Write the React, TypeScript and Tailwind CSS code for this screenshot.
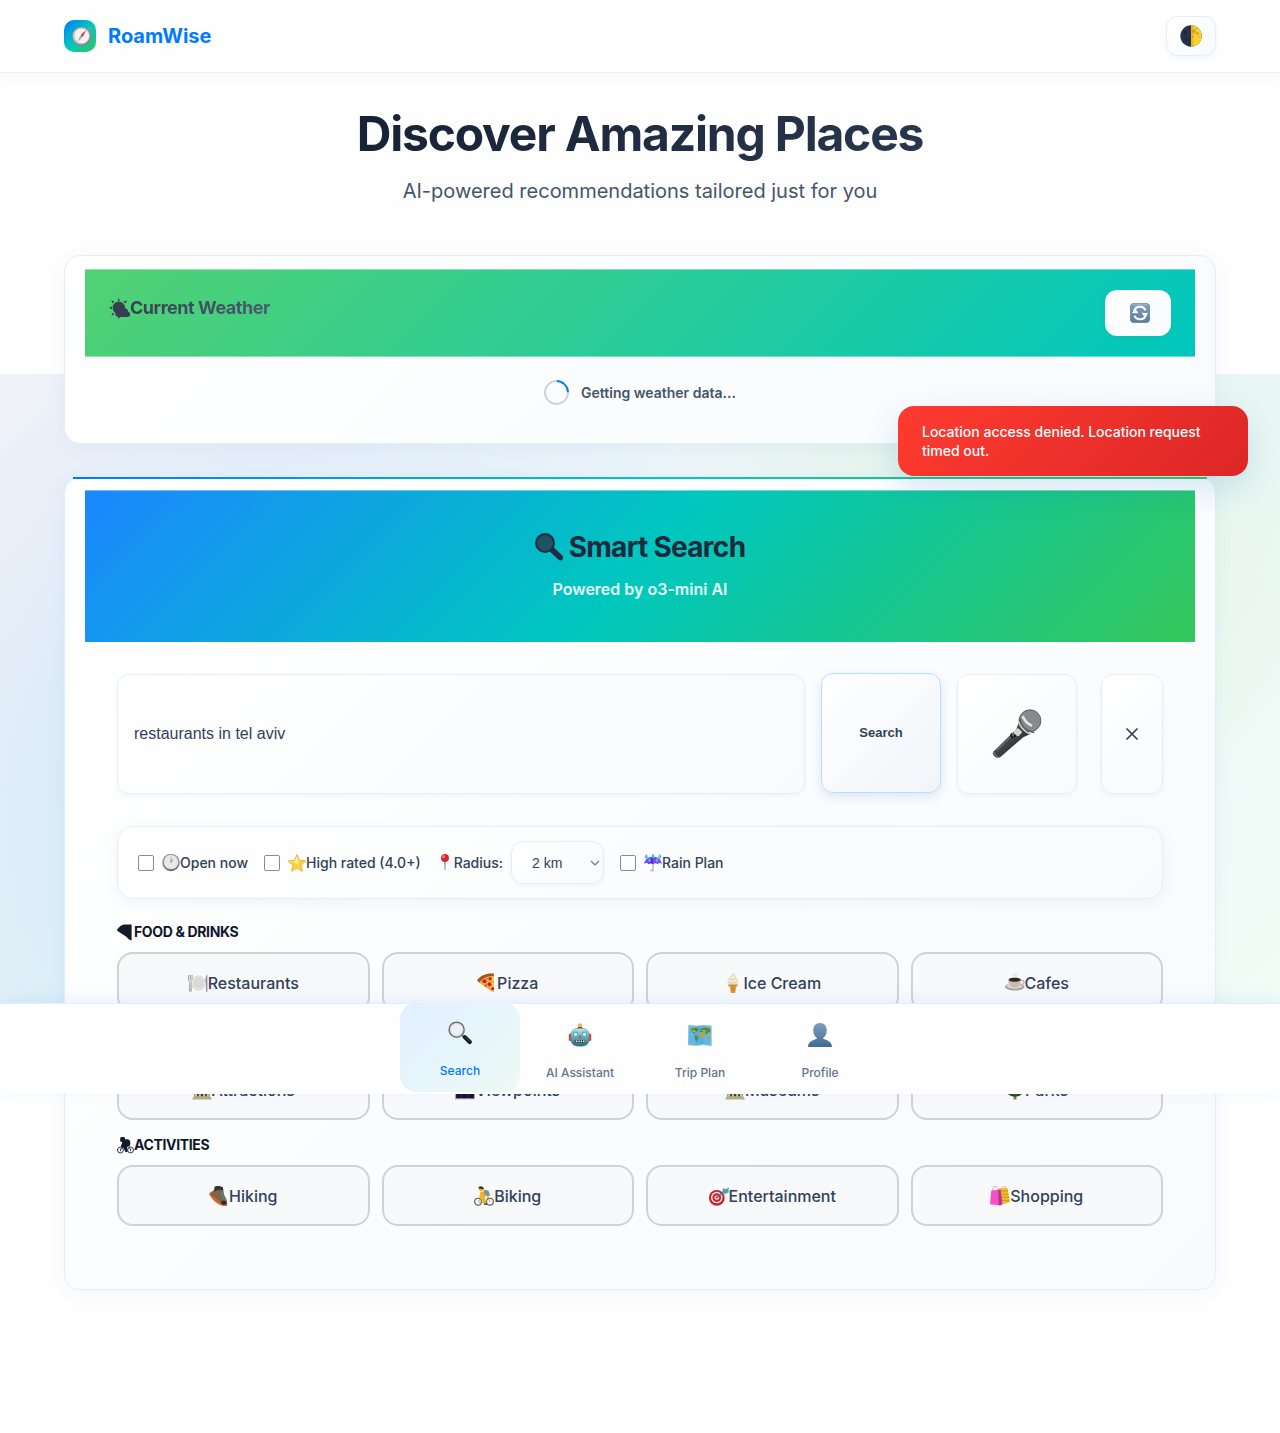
import type { ReactNode } from "react";

type IconProps = { className?: string };

function Svg({ className = "", children }: { className?: string; children: ReactNode }) {
  return (
    <svg viewBox="0 0 32 32" className={`shrink-0 ${className}`} aria-hidden="true">
      {children}
    </svg>
  );
}

function CompassIcon({ className }: IconProps) {
  return (
    <Svg className={className}>
      <defs>
        <linearGradient id="compassRim" x1="0" y1="0" x2="1" y2="1">
          <stop offset="0" stopColor="#e4e6e8" />
          <stop offset="1" stopColor="#6f7478" />
        </linearGradient>
      </defs>
      <circle cx="28" cy="4" r="2.4" fill="none" stroke="#8b9ba0" strokeWidth="1.2" />
      <circle cx="15.500" cy="16.500" r="15" fill="url(#compassRim)" stroke="#7b8084" />
      <circle cx="15.500" cy="16" r="12.300" fill="#f3f3f4" stroke="#b9bcc0" />
      <path d="M22.500 6.500 17.3 17.700 13.700 14.700Z" fill="#e22b2b" />
      <path d="M8.500 25.500 13.700 14.700 17.300 17.700Z" fill="#a7abb0" />
    </Svg>
  );
}

function MoonIcon({ className }: IconProps) {
  return (
    <Svg className={className}>
      <circle cx="16" cy="16" r="15.5" fill="#263248" />
      <path d="M16 .5a15.5 15.5 0 0 1 0 31Z" fill="#fbd22c" />
      <path d="M16 .5v31c2 0 3-.2 4-.5V1c-1-.3-2-.5-4-.5" fill="#d9a62c" opacity=".55" />
      <circle cx="20" cy="9" r="2.6" fill="#c99b32" />
      <circle cx="25" cy="12" r="2.4" fill="#d8a830" />
      <circle cx="23" cy="6" r="1.6" fill="#dcae38" />
      <circle cx="18" cy="17" r="1.5" fill="#c99b32" />
      <circle cx="27" cy="17" r="1.2" fill="#e0b02e" />
      <circle cx="8" cy="11" r="2.5" fill="#1c263b" />
      <circle cx="10" cy="21" r="2" fill="#1f2a40" />
    </Svg>
  );
}

function SunCloudShape({ className }: IconProps) {
  return (
    <Svg className={className}>
      <g fill="#373e50">
        <circle cx="15" cy="15" r="9.500" />
        <path d="M10 23c-1-8 8-11 12-7 5-1 7 2 7 5 5 1 4 8-1 8H15c-4 0-6-3-5-6Z" />
        <path d="m15 0 1.800 4h-3.600ZM3.600 3.600l4.600 1.800-2.800 2.800ZM27 3.600 25.200 8.200l-3.200-2.400ZM0 15l4.500-2v4ZM3.600 27l1.800-4.600 2.800 2.800ZM15 32l-1.800-4h3.600Z" />
      </g>
    </Svg>
  );
}

function RefreshIcon({ className }: IconProps) {
  return (
    <Svg className={className}>
      <defs>
        <linearGradient id="refreshTile" x1="0" y1="0" x2="0" y2="1">
          <stop offset="0" stopColor="#9db9d6" />
          <stop offset=".2" stopColor="#7795b5" />
          <stop offset="1" stopColor="#5f7f9f" />
        </linearGradient>
      </defs>
      <rect x=".5" y=".5" width="31" height="31" rx="6" fill="url(#refreshTile)" stroke="#58738f" />
      <path d="M6.500 14C8 4.500 21 3.500 25 11.500M25.500 18C24 28 11 28.500 7 20.500" fill="none" stroke="#fff" strokeWidth="3.200" />
      <path d="M3 16 13.500 16.500 8.500 9ZM29 16 18.500 15.500l5 7.500Z" fill="#fff" />
    </Svg>
  );
}

function MagnifierShape({ className }: IconProps) {
  return (
    <Svg className={className}>
      <path d="m20 19.500 9 8.500" stroke="#202c42" strokeWidth="6.500" strokeLinecap="round" />
      <circle cx="11.500" cy="11.500" r="10.200" fill="#1f5263" stroke="#202c42" strokeWidth="2.400" />
    </Svg>
  );
}

function MagnifierIcon({ className }: IconProps) {
  return (
    <Svg className={className}>
      <path d="m19 19 3 3" stroke="#7b7f86" strokeWidth="3" />
      <path d="m22.500 21.500 6.500 6.500" stroke="#15171a" strokeWidth="5.500" strokeLinecap="round" />
      <path d="m23 21 6 6" stroke="#6c7077" strokeWidth="1" />
      <circle cx="11.500" cy="11.500" r="10" fill="#edf1f5" stroke="#6c717a" strokeWidth="2" />
      <circle cx="11.500" cy="11.500" r="8.300" fill="none" stroke="#c8ced6" strokeWidth="1" />
    </Svg>
  );
}

function MicIcon({ className }: IconProps) {
  return (
    <Svg className={className}>
      <defs>
        <linearGradient id="micBody" x1="0" y1="0" x2="1" y2="1">
          <stop offset="0" stopColor="#77797b" />
          <stop offset=".4" stopColor="#4b4b4c" />
          <stop offset="1" stopColor="#111" />
        </linearGradient>
        <pattern id="micMesh" width="1.200" height="1.200" patternUnits="userSpaceOnUse">
          <rect width="1.200" height="1.200" fill="#6a6c6f" />
          <circle cx=".6" cy=".6" r=".4" fill="#bcbec1" />
        </pattern>
      </defs>
      <path d="M17.200 8.500 15.500 13 .8 27.300c-.8 1 .1 2.400 1.200 3.200 1 .8 2.400 1.100 3.200.3L20 18l4.500-2Z" fill="url(#micBody)" />
      <path d="M15.500 14.500 3 26.500" stroke="#8a8c8e" strokeWidth=".6" />
      <path d="M1 27.200c.3 1.800 2 3.500 4 3.900" stroke="#a8aaac" strokeWidth=".5" fill="none" />
      <circle cx="24.300" cy="7.500" r="7" fill="url(#micMesh)" stroke="#4e5052" strokeWidth=".5" />
      <path d="M17.600 6c1 5 4.500 8.500 9.500 9" stroke="#595b5d" strokeWidth="1" fill="none" />
      <path d="M19.600 4.500c1.200 3.200 3 5 6 6.200" stroke="#dfe5eb" strokeWidth="1.700" fill="none" />
      <path d="M17 8c1.200 3.900 3.200 6.200 7 7.900" stroke="#d9dcdf" strokeWidth=".8" fill="none" />
      <rect x="14.400" y="12.800" width="4.200" height="4.200" rx="1" transform="rotate(43 16.500 14.900)" fill="#d3d4d6" />
      <path d="M12.600 15.600c-.9 1-.5 2.300.7 2.800M15.200 16.800l-1 1" stroke="#0b0b0b" strokeWidth=".8" fill="none" />
    </Svg>
  );
}

function ClockIcon({ className }: IconProps) {
  return (
    <Svg className={className}>
      <defs>
        <linearGradient id="clockRim" x1="0" y1="0" x2="0" y2="1">
          <stop offset="0" stopColor="#a6a6a6" />
          <stop offset="1" stopColor="#6b6b6b" />
        </linearGradient>
      </defs>
      <circle cx="16" cy="15" r="15.500" fill="url(#clockRim)" />
      <circle cx="16" cy="14.500" r="12.800" fill="#e9e9e9" />
      <path d="M16 3v2M16 24v2M4.500 14.500h2M25.500 14.500h2M8 6.500l1.300 1.300M24 6.500l-1.300 1.300M8 22.500l1.300-1.300M24 22.500l-1.300-1.300" stroke="#c9c9c9" strokeWidth="1.200" />
      <path d="M16 15.500V6M16 15.500l3.500-6" stroke="#8a8a8a" strokeWidth="1.400" />
    </Svg>
  );
}

function StarIcon({ className }: IconProps) {
  return (
    <Svg className={className}>
      <path
        d="m16 1 4.500 10.200 11 1.100-8.300 7.400 2.500 11L16 25l-9.700 5.700 2.500-11L.5 12.300l11-1.100Z"
        fill="#fdd43f"
        stroke="#efa82f"
        strokeWidth="1.500"
        strokeLinejoin="round"
      />
      <path d="m16 4 3 8.500-3 5-8-4 4.500-1Z" fill="#fff3a8" />
    </Svg>
  );
}

function PinIcon({ className }: IconProps) {
  return (
    <Svg className={className}>
      <path d="M13.800 13h2.400l-.4 17h-1.600Z" fill="#8c7f7c" />
      <circle cx="15" cy="7.500" r="7.500" fill="#d9262b" />
      <circle cx="12.500" cy="5" r="2.600" fill="#f58b85" />
    </Svg>
  );
}

function UmbrellaIcon({ className }: IconProps) {
  return (
    <Svg className={className}>
      <path d="M16 12v15c0 4-4 4-4 1" fill="none" stroke="#a4a1aa" strokeWidth="2" />
      <path d="M0 18C2 8 9 5 16 5s14 3 16 13c-3-3-6-2-8 0-2-2-5-2-8 0-3-2-6-2-8 0-2-2-5-3-8 0Z" fill="#8347ea" />
      <path d="M16 5c-5 2-7 7-8 13 2-2 5-2 8 0Z" fill="#4a35cf" />
      <g fill="#43bdf5">
        <path d="M4 0c3 4 4 8 0 8s-3-4 0-8ZM16-1c3 4 4 8 0 8s-3-4 0-8ZM28 0c3 4 4 8 0 8s-3-4 0-8ZM10 7c3 4 3 7 0 7s-3-3 0-7ZM23 7c3 4 3 7 0 7s-3-3 0-7Z" />
      </g>
    </Svg>
  );
}

function PizzaShape({ className }: IconProps) {
  return (
    <Svg className={className}>
      <path d="M0 11Q6 2 14 1h13.500v30c-4 0-7-4-10-7L1 13Z" fill="#121a2c" />
    </Svg>
  );
}

function CyclistShape({ className }: IconProps) {
  return (
    <Svg className={className}>
      <g fill="none" stroke="#222b3e" strokeWidth="1.800">
        <circle cx="6.500" cy="24.500" r="5.500" />
        <circle cx="25.500" cy="24.500" r="5.500" />
        <path d="M6.500 24.500 12 17M25.500 24.500 22 16M6.500 22v5M25.500 22v5" strokeWidth="1.500" />
      </g>
      <path d="M6 2 8 0h6l2 5c6-2 9 1 9 6 0 3 0 5-2 6l-4 2 1 9h-4l-4-8-5-2 3-8-4-2Z" fill="#121a2c" />
    </Svg>
  );
}

function PlateIcon({ className }: IconProps) {
  return (
    <Svg className={className}>
      <path d="M1 3v8c0 2 1 3 2 3.500L2.300 29h3L4.700 14.500C6 14 6.500 12 6.500 11V3M3.700 3v9" fill="none" stroke="#7f8c97" strokeWidth="1.300" />
      <path d="M31 2v28h-2l-.5-13c-1.500-5-.5-12 2.500-15Z" fill="#8b959e" />
      <circle cx="16.500" cy="16" r="11.200" fill="#eceae7" stroke="#bfc0c1" strokeWidth="1" />
      <circle cx="16.500" cy="16" r="7.500" fill="#dcdad7" stroke="#c6c4c2" />
    </Svg>
  );
}

function PizzaIcon({ className }: IconProps) {
  return (
    <Svg className={className}>
      <path d="M1 13C6 5 16 0 27 1v30C19 27 8 19 1 13Z" fill="#efb04a" />
      <path d="M0 12C5 4 16 0 27 1v4C18 4 9 8 4 15Z" fill="#a9541d" />
      <path d="M27 6v24l-4-2V7Z" fill="#f5c464" />
      <g fill="#c9261b">
        <circle cx="12" cy="13" r="3.200" />
        <circle cx="21" cy="9" r="2.800" />
        <circle cx="20" cy="18" r="3.200" />
        <circle cx="25" cy="25" r="2.500" />
        <circle cx="14" cy="20" r="1.500" />
      </g>
      <path d="M15 8l2 2M8 14l1 1M25 13l1 2" stroke="#5b7a28" strokeWidth="1.500" />
    </Svg>
  );
}

function IceCreamIcon({ className }: IconProps) {
  return (
    <Svg className={className}>
      <path d="M8 17h16l-1 5h-2l-1.500 10h-7L11 22H9Z" fill="#e3a245" />
      <path d="M11 20h10M12 24h8M13 28h6M14.500 18v13M17.500 18v13" stroke="#bd7b2b" strokeWidth=".8" />
      <path d="M17 0c-1 3 5 4 3 8 4 1 4 5 3 6 2 2 1 4-1 4H10c-3 0-3-3-1-4-2-2-1-5 2-6-1-4 4-4 6-8Z" fill="#f2ead5" stroke="#d3c6a7" strokeWidth=".8" />
      <path d="M12 10c3 2 6 0 8-1M10 15c4 1.500 8 1 12-1" fill="none" stroke="#cdbd98" />
    </Svg>
  );
}

function CoffeeIcon({ className }: IconProps) {
  return (
    <Svg className={className}>
      <ellipse cx="15.500" cy="22" rx="15.500" ry="6" fill="#a9a29b" />
      <ellipse cx="15.500" cy="20.500" rx="13" ry="4.500" fill="#dedad5" />
      <path d="M25 12c7-2 8 6-1 7" fill="none" stroke="#bab4ad" strokeWidth="2.200" />
      <path d="M5 10h21c0 8-3 13-10.500 13S5 18 5 10Z" fill="#c4beb7" />
      <ellipse cx="15.500" cy="10.500" rx="10.500" ry="3.800" fill="#d8d3ce" />
      <ellipse cx="15.500" cy="10.800" rx="9.500" ry="3.200" fill="#3c2117" />
      <path d="M14 6c-3-3 3-3 1-6M18 6c-2-2 1-3 0-5" fill="none" stroke="#cfd0d2" strokeWidth="1.400" />
    </Svg>
  );
}

function TempleIcon({ className }: IconProps) {
  return (
    <Svg className={className}>
      <path d="M16 3 30 11H2Z" fill="#c9bf92" />
      <path d="M4 12h24v3H4Z" fill="#afa576" />
      <path d="M4 15h24v12H4Z" fill="#463d31" />
      <path d="M5 15h3v12H5ZM11 15h3v12h-3ZM18 15h3v12h-3ZM24 15h3v12h-3Z" fill="#d8d0a6" />
      <path d="M3 26h26l3 5H0Z" fill="#b7ae80" />
    </Svg>
  );
}

function NightViewIcon({ className }: IconProps) {
  return (
    <Svg className={className}>
      <rect x="1" y="2" width="30" height="28" fill="#2c2147" />
      <path d="M3 12h6v18H3ZM12 7h8v23h-8ZM23 14h6v16h-6Z" fill="#191329" />
      <path d="M0 30h32" stroke="#a9a4b5" strokeWidth="1.500" />
    </Svg>
  );
}

function TreeIcon({ className }: IconProps) {
  return (
    <Svg className={className}>
      <path d="M14.500 22h3l1 9h-5Z" fill="#9b7225" />
      <path d="M16 1c6 0 10 5 9 9 5 3 6 10 1 13-4 3-16 3-20 0-5-3-4-10 1-13C6 6 10 1 16 1Z" fill="#2f6a22" />
      <path d="M5 22c7 3 15 3 22 0-4 6-18 6-22 0Z" fill="#153f12" />
    </Svg>
  );
}

function BootIcon({ className }: IconProps) {
  return (
    <Svg className={className}>
      <path d="M0 13 3 9l9 9 8 9 9 2v3l-8-.500Q11 28 5 20Z" fill="#df6028" />
      <path d="M3 10 9 6V2l5-2 8 2 2 11c1 4 5 8 5 13l-1 4c-6 2-9-2-12-6L3 14Z" fill="#85624a" />
      <path d="M9 1c4-2 9-1 13 1l1 5-8-1-7 3Z" fill="#3b3431" />
      <path d="m20 8-2 2 4 2-2 3 5 2-3 3 5 2" stroke="#2c9da0" strokeWidth="1.500" fill="none" />
      <path d="M19 25q5-3 9 1v3l-7 1Z" fill="#382a27" />
    </Svg>
  );
}

function BikingIcon({ className }: IconProps) {
  return (
    <Svg className={className}>
      <g fill="#f5f5f5" stroke="#575f60" strokeWidth="1.800">
        <circle cx="6.500" cy="25" r="5.500" />
        <circle cx="25.500" cy="25" r="5.500" />
      </g>
      <path d="m6.500 25 6-7 6 8 4-9 3 8M19 26H8" fill="none" stroke="#a1a437" strokeWidth="1.500" />
      <path d="m10 10 9-3 5 6-7 5 3 11h-4l-4-9-3-3Z" fill="#ecb124" />
      <path d="m16 6 7 1 3 8-5 1-5-4Z" fill="#878e94" />
      <path d="m12 10-2 7 4 1" stroke="#f2b828" strokeWidth="2.500" fill="none" />
      <circle cx="11.500" cy="5" r="3.500" fill="#f2b21e" />
      <path d="M7 4c0-5 8-5 9 1Z" fill="#313435" />
      <path d="M16 29h5" stroke="#333" strokeWidth="2" />
    </Svg>
  );
}

function TargetIcon({ className }: IconProps) {
  return (
    <Svg className={className}>
      <circle cx="12.500" cy="19" r="12.500" fill="#c4202a" />
      <circle cx="12.500" cy="18.500" r="9.200" fill="#f4eeee" />
      <circle cx="12.500" cy="18.500" r="7" fill="#d3232f" />
      <circle cx="12.500" cy="18.500" r="3.500" fill="#fff" />
      <circle cx="12.500" cy="18.500" r="1.700" fill="#c4202a" />
      <path d="m13 18 14-12" stroke="#357d87" strokeWidth="2.400" />
      <path d="m21 10 2-7 4 2 5-3-1 5 1 3-7 3Z" fill="#46a8b0" />
    </Svg>
  );
}

function BagsIcon({ className }: IconProps) {
  return (
    <Svg className={className}>
      <path d="M19 5c-1-6 7-6 7 0M4 7c-1-8 9-9 9 0" stroke="#eba0a6" strokeWidth="1.500" fill="none" />
      <path d="m13 4 15-1 4 23-15 4Z" fill="#efbc25" />
      <path d="M17 8h12M18 13h12M19 18h12M19 23h12" stroke="#d1911b" strokeWidth="1.500" />
      <path d="m2 7 13-1 3 25-18-2Z" fill="#f550c6" />
      <path d="m13 6 4 0 3 23-6 2Z" fill="#b83397" />
    </Svg>
  );
}

function RobotIcon({ className }: IconProps) {
  return (
    <Svg className={className}>
      <defs>
        <linearGradient id="robotHead" x1="0" y1="0" x2="0" y2="1">
          <stop offset="0" stopColor="#cfe5e8" />
          <stop offset="1" stopColor="#1f6876" />
        </linearGradient>
      </defs>
      <rect x="1" y="14" width="5" height="10" rx="2" fill="#cc4c46" />
      <rect x="26" y="14" width="5" height="10" rx="2" fill="#cc4c46" />
      <rect x="13" y="5" width="6" height="4" fill="#6c3c60" />
      <circle cx="16" cy="3" r="2.800" fill="#f1bb2b" />
      <path d="M4 15q0-8 12-8t12 8v9q-1 7-12 7T4 24Z" fill="url(#robotHead)" stroke="#4e8c94" strokeWidth=".8" />
      <circle cx="10" cy="15" r="3.900" fill="#36bed4" />
      <circle cx="22" cy="15" r="3.900" fill="#36bed4" />
      <circle cx="10" cy="15" r="2" fill="#fff" />
      <circle cx="22" cy="15" r="2" fill="#fff" />
      <path d="m16 16 2 4h-4Z" fill="#dd3d35" />
      <rect x="9" y="22.500" width="14" height="4" rx="1.500" fill="#244952" />
      <path d="M10.500 24.500h2M14 24.500h1.700M17 24.500h1.700M20 24.500h2" stroke="#edf1f2" strokeWidth="2.200" />
    </Svg>
  );
}

function MapIcon({ className }: IconProps) {
  return (
    <Svg className={className}>
      <path d="m1 3 10 1 10-1 10 1v26l-10-1-10 1-11-1Z" fill="#4fb0ea" stroke="#c9c6af" strokeWidth="1.200" />
      <path d="M1 3 11 4v26L0 29ZM21 3l10 1v26l-10-1Z" fill="#6cc2f0" opacity=".5" />
      <path d="m4 8 6-2 5 2-2 3-3 1-1 3-4-4ZM9 16l5 2-1 4-2 4-2-5ZM17 8l5-2 7 1 1 5-4 1-1 3-3-4-6 0Z" fill="#5f8a34" />
      <path d="m16 13 5-1 2 3-3 7-2-4-3-2ZM25 19l4-1v4l-3 1Z" fill="#b9a53f" />
      <path d="m6 10 4 2M19 10l5 1" stroke="#e7c65a" strokeWidth="1.500" />
    </Svg>
  );
}

function PersonIcon({ className }: IconProps) {
  return (
    <Svg className={className}>
      <defs>
        <linearGradient id="bust" x1="0" y1="0" x2="0" y2="1">
          <stop offset="0" stopColor="#7d9fc0" />
          <stop offset="1" stopColor="#426b93" />
        </linearGradient>
      </defs>
      <path
        d="M16 0c6 0 9 4 9 10 0 5-2 8-5 10 0 3 12 2 12 12H0C0 22 12 23 12 20c-3-2-5-5-5-10 0-6 3-10 9-10Z"
        fill="url(#bust)"
      />
    </Svg>
  );
}

type IconComponent = (props: IconProps) => ReactNode;
type Category = { label: string; Icon: IconComponent };

const food: Category[] = [
  { label: "Restaurants", Icon: PlateIcon },
  { label: "Pizza", Icon: PizzaIcon },
  { label: "Ice Cream", Icon: IceCreamIcon },
  { label: "Cafes", Icon: CoffeeIcon },
];
const sights: Category[] = [
  { label: "Attractions", Icon: TempleIcon },
  { label: "Viewpoints", Icon: NightViewIcon },
  { label: "Museums", Icon: TempleIcon },
  { label: "Parks", Icon: TreeIcon },
];
const activities: Category[] = [
  { label: "Hiking", Icon: BootIcon },
  { label: "Biking", Icon: BikingIcon },
  { label: "Entertainment", Icon: TargetIcon },
  { label: "Shopping", Icon: BagsIcon },
];

function CategoryGrid({ items }: { items: Category[] }) {
  return (
    <div className="grid grid-cols-4 gap-3">
      {items.map(({ label, Icon }) => (
        <button
          key={label}
          type="button"
          className="flex h-[61px] items-center justify-center rounded-2xl border-2 border-[#d1d1d6] bg-[#f8f9fb] text-base font-medium text-slate-700"
        >
          <Icon className="size-5" />
          {label}
        </button>
      ))}
    </div>
  );
}

function CategoryHeading({ Icon, children }: { Icon: IconComponent; children: ReactNode }) {
  return (
    <h3 className="mb-[11px] flex h-[18px] items-center text-sm font-bold tracking-tight text-slate-900">
      <Icon className="size-[17px]" />
      {children}
    </h3>
  );
}

function CheckFilter({ label, Icon }: { label: string; Icon: IconComponent }) {
  return (
    <label className="flex items-center gap-2">
      <input type="checkbox" className="size-4 appearance-none rounded-xs border border-[#8c8c8c] bg-white checked:bg-[#007aff]" />
      <span className="flex items-center">
        <Icon className="size-[18px]" />
        {label}
      </span>
    </label>
  );
}

const softBox =
  "border border-[#e0effe] bg-linear-135/srgb from-white to-[#f8fafc] shadow-[0_2px_4px_rgba(0,70,150,0.05)]";

export default function App() {
  return (
    <div className="relative bg-[#fefefe] pb-36 font-['Inter',sans-serif] text-slate-700">
      <div
        className="absolute inset-x-0 top-[374px] h-[720px] bg-[radial-gradient(circle_at_20%_50%,rgba(0,122,255,0.10),transparent_50%),radial-gradient(circle_at_80%_20%,rgba(200,230,150,0.22),transparent_30%),radial-gradient(circle_at_30%_90%,rgba(0,199,190,0.08),transparent_50%),linear-gradient(135deg,#f4f4f8,#e9f6fa_55%,#f1fdf5)]"
        aria-hidden="true"
      />

      <header className="relative border-b border-[#e5f2ff] bg-[#fefefe] shadow-[0_4px_16px_rgba(0,0,0,0.03)]">
        <div className="mx-auto flex h-[72px] max-w-[1152px] items-center justify-between">
          <a href="#home" className="flex items-center gap-3 text-xl font-bold text-[#007aff]">
            <span className="flex size-8 items-center justify-center rounded-[10px] bg-linear-135/srgb from-[#007aff] via-[#00c7be] to-[#34c759] pl-1">
              <CompassIcon className="size-5" />
            </span>
            RoamWise
          </a>
          <button type="button" aria-label="Toggle theme" className={`flex h-10 w-[50px] items-center justify-center rounded-xl ${softBox}`}>
            <MoonIcon className="size-[22px]" />
          </button>
        </div>
      </header>

      <main className="relative mx-auto max-w-[1152px]">
        <div className="pt-8 pb-12 text-center">
          <h1 className="bg-linear-135/srgb from-slate-900 to-slate-700 bg-clip-text text-5xl leading-[58px] font-bold tracking-tight text-transparent">
            Discover Amazing Places
          </h1>
          <p className="mt-3 text-xl leading-8 text-slate-600">AI-powered recommendations tailored just for you</p>
        </div>

        <section className="rounded-2xl border border-[#e3effb] bg-linear-135/srgb from-white to-[#f8fafc] px-5 pt-[13px] shadow-[0_4px_20px_rgba(0,90,180,0.05)]">
          <div className="flex h-[88px] items-start justify-between border-y border-white/40 bg-linear-135/srgb from-[#52d173] to-[#00c7be] bg-origin-border px-6 pt-5">
            <h2 className="flex items-center text-lg leading-9 font-bold tracking-tight">
              <SunCloudShape className="size-[21px]" />
              <span className="bg-linear-to-r/srgb from-[#374151] to-[#4b5b70] bg-clip-text text-transparent">Current Weather</span>
            </h2>
            <button type="button" aria-label="Refresh weather" className="flex h-[46px] w-[66px] items-center justify-center rounded-xl border border-white/60 bg-linear-135/srgb from-white to-[#f8fafc] pl-1 shadow-[0_2px_4px_rgba(0,70,150,0.05)]">
              <RefreshIcon className="size-5" />
            </button>
          </div>
          <div className="flex items-center justify-center gap-3 pt-[23px] pb-[38px] text-sm font-semibold text-slate-600">
            <span className="size-[25px] rotate-45 rounded-full border-2 border-[#d1d1d6] border-t-[#007aff]" />
            Getting weather data...
          </div>
        </section>

        <section className="relative mt-[33px] rounded-2xl border border-[#e0effe] bg-linear-135/srgb from-white to-[#f8fafc] px-5 pt-3 pb-[63px] shadow-[0_4px_20px_rgba(0,90,180,0.05)]">
          <div className="absolute inset-x-2 -top-px h-0.5 bg-linear-to-r/srgb from-[#007aff] via-[#00c7be] to-[#34c759]" />
          <div className="border-t border-white/40 bg-linear-135/srgb from-[#1a87ff] via-[#00c7be] to-[#34c759] bg-origin-border pt-[35px] pb-10 text-center">
            <h2 className="flex items-center justify-center gap-1.5 text-[28px] leading-[42px] font-bold tracking-tight text-slate-800">
              <MagnifierShape className="size-7" />
              Smart Search
            </h2>
            <p className="mt-2 text-base leading-[26px] font-semibold text-white/90">Powered by o3-mini AI</p>
          </div>

          <div className="px-8 pt-8">
            <form className="flex h-[120px] gap-4" onSubmit={(event) => event.preventDefault()}>
              <input
                type="text"
                aria-label="Search places"
                defaultValue="restaurants in tel aviv"
                className={`min-w-0 flex-1 rounded-xl px-4 font-['Liberation_Sans',sans-serif] text-base outline-none ${softBox}`}
              />
              <button type="submit" className="-mt-px mb-px w-[120px] rounded-xl border border-[#b9dbfd] bg-linear-135/srgb from-white to-[#f1f5f9] font-['Liberation_Sans',sans-serif] text-[13px] font-bold shadow-[0_4px_12px_rgba(0,70,160,0.12)]">
                Search
              </button>
              <button type="button" aria-label="Voice search" className={`flex w-[120px] items-center justify-center rounded-xl ${softBox}`}>
                <MicIcon className="size-[50px]" />
              </button>
              <button type="button" aria-label="Clear" className={`ml-2 flex w-[62px] items-center justify-center rounded-xl ${softBox}`}>
                <svg viewBox="0 0 12 12" className="size-3" aria-hidden="true">
                  <path d="m1 1 10 10M11 1 1 11" stroke="#334155" strokeWidth="1.700" strokeLinecap="round" />
                </svg>
              </button>
            </form>

            <div className="mt-8 flex h-[73px] items-center gap-4 rounded-2xl border border-[#e0effe] bg-linear-135/srgb from-white to-[#f8fafc] px-5 text-sm font-medium shadow-[0_4px_14px_rgba(0,90,180,0.06)]">
              <CheckFilter label="Open now" Icon={ClockIcon} />
              <CheckFilter label="High rated (4.0+)" Icon={StarIcon} />
              <div className="flex items-center gap-2">
                <label htmlFor="radius" className="flex items-center">
                  <PinIcon className="size-[17px]" />
                  Radius:
                </label>
                <div className="relative">
                  <select id="radius" defaultValue="2 km" className={`h-[43px] w-[93px] appearance-none rounded-xl pl-5 font-['Liberation_Sans',sans-serif] text-sm font-normal ${softBox}`}>
                    <option>2 km</option>
                  </select>
                  <svg viewBox="0 0 10 6" className="pointer-events-none absolute top-[19px] right-1 h-1.5 w-2.5" aria-hidden="true">
                    <path d="m1 1 4 4 4-4" fill="none" stroke="#6b7480" strokeWidth="1.200" />
                  </svg>
                </div>
              </div>
              <CheckFilter label="Rain Plan" Icon={UmbrellaIcon} />
            </div>

            <div className="mt-6">
              <CategoryHeading Icon={PizzaShape}>FOOD &amp; DRINKS</CategoryHeading>
              <CategoryGrid items={food} />
            </div>
            <div className="mt-[46px]">
              <CategoryGrid items={sights} />
            </div>
            <div className="mt-4">
              <CategoryHeading Icon={CyclistShape}>ACTIVITIES</CategoryHeading>
              <CategoryGrid items={activities} />
            </div>
          </div>
        </section>
      </main>

      <div
        role="alert"
        className="absolute top-[406px] right-8 w-[350px] rounded-2xl bg-linear-135/srgb from-[#ff3b30] to-[#dc2626] px-6 py-4 text-sm leading-[19px] font-medium text-white shadow-[0_12px_32px_rgba(0,110,200,0.16)]"
      >
        Location access denied. Location request timed out.
      </div>

      <nav className="absolute inset-x-0 top-[1003px] flex h-[91px] justify-center border-t border-[#e0effd] bg-[#fefefe] text-xs font-medium text-slate-500 shadow-[0_-4px_16px_rgba(0,122,255,0.08)]">
        <a href="#search" className="-mt-px mb-0.5 flex w-[120px] flex-col items-center rounded-2xl bg-linear-135/srgb from-[#e2efff] via-[#e7f5fd] to-[#edfaf3] pt-[18px] text-[#007aff]">
          <MagnifierIcon className="size-6" />
          <span className="mt-[18px]">Search</span>
        </a>
        <a href="#assistant" className="flex w-[120px] flex-col items-center pt-[19px]">
          <RobotIcon className="size-6" />
          <span className="mt-[18px]">AI Assistant</span>
        </a>
        <a href="#trip" className="flex w-[120px] flex-col items-center pt-[19px]">
          <MapIcon className="size-6" />
          <span className="mt-[18px]">Trip Plan</span>
        </a>
        <a href="#profile" className="flex w-[120px] flex-col items-center pt-[19px]">
          <PersonIcon className="size-6" />
          <span className="mt-[18px]">Profile</span>
        </a>
      </nav>
    </div>
  );
}
